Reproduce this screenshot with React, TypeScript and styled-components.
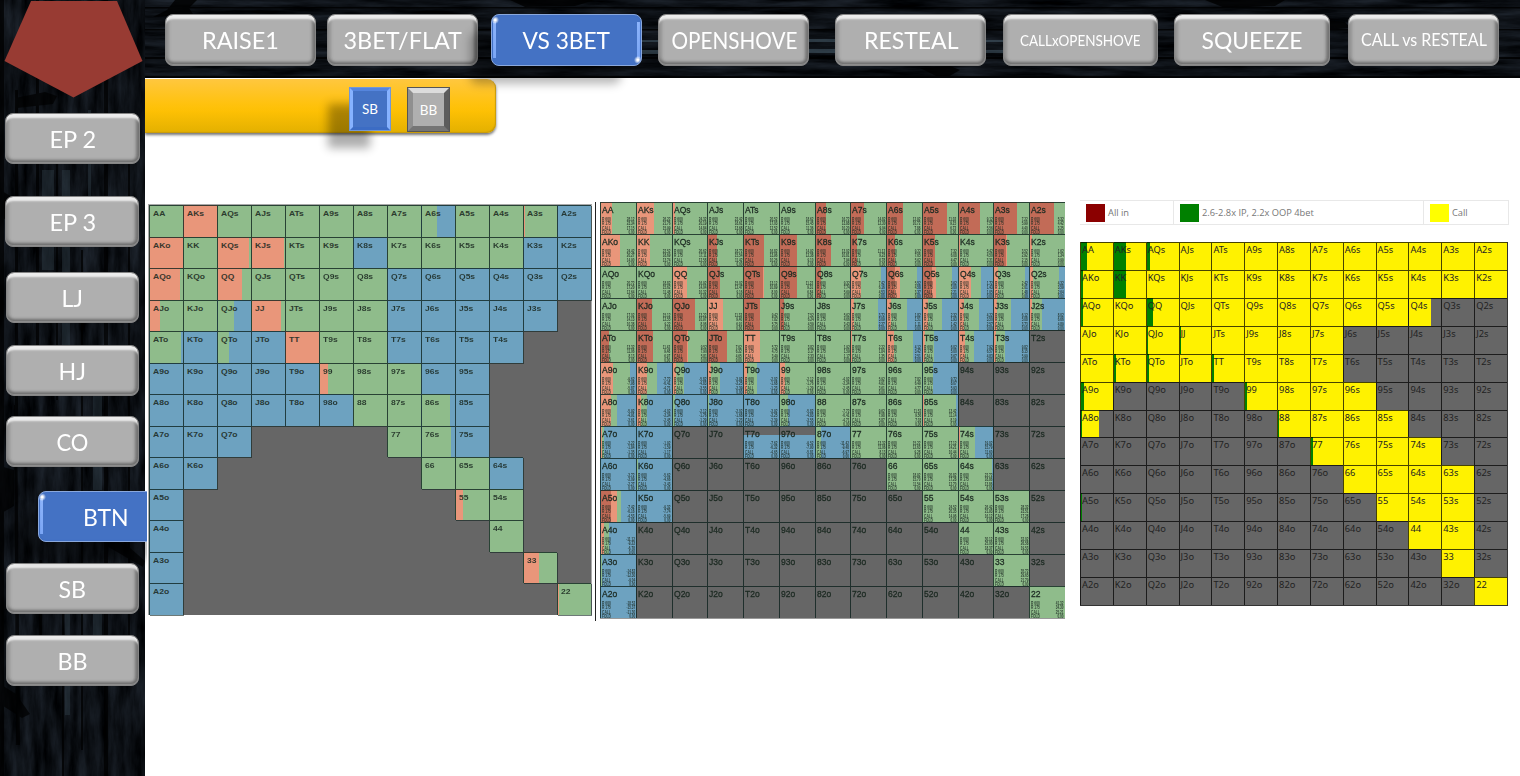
import React, { useLayoutEffect, useRef, useState } from 'react';
import styled, { createGlobalStyle, css } from 'styled-components';

const GlobalStyle = createGlobalStyle`
  * { box-sizing: border-box; }
  body { margin: 0; background: #fff; overflow: hidden; }
`;

const Page = styled.div`
  display: grid;
  grid-template-columns: 145px 1375px;
  grid-template-rows: 78px 698px;
  width: 1520px;
  height: 776px;
  background: #fff;
  font-family: Lato, 'Open Sans', sans-serif;
`;

const Sidebar = styled.nav`
  grid-row: 1 / 3;
  position: relative;
  z-index: 2;
  background: #090c10;
  display: flex;
  flex-direction: column;
  align-items: flex-start;
`;

const Header = styled.nav`
  position: relative;
  z-index: 1;
  background: #090c10;
  display: flex;
  align-items: flex-start;
  padding: 14px 0 0 19.5px;
`;

const Backdrop = styled.svg`
  position: absolute;
  inset: 0;
  width: 100%;
  height: 100%;
  z-index: -1;
`;

const Pentagon = styled.svg`
  display: block;
  width: 145px;
  height: 113px;
  flex: none;
`;

const greyBevel = css`
  background: #afafaf;
  border: 1px solid #858585;
  box-shadow:
    inset 0 -1px 0 #8d8d8d,
    inset 0 6px 2px -2px #ececec,
    inset 0 -5px 3px -2px #6d6d6d,
    inset -4px 0 3px -1px #747474,
    inset 4px 0 3px -1px #929292;
`;

const blueBevel = css`
  background:
    radial-gradient(circle at 3px 5px, #fff 0 1px, transparent 4px),
    radial-gradient(circle at calc(100% - 3px) calc(100% - 5px), #fff 0 1px, transparent 4px),
    linear-gradient(#8db4fb, #7ba6f5) 1px 7px / 3px calc(100% - 14px) no-repeat,
    linear-gradient(#8db4fb, #7ba6f5) calc(100% - 1px) 7px / 3px calc(100% - 14px) no-repeat,
    #4472c4;
  border: 1px solid #8aa8dc;
  box-shadow: -21px 18px 10px rgba(0, 0, 0, 0.28), inset 0 0 2px #3d6bc0;
`;

const NavButton = styled.button<{ $w: number; $h?: number; $gap?: number; $active?: boolean; $cut?: boolean }>`
  flex: none;
  display: flex;
  align-items: center;
  justify-content: center;
  padding: 1px 0 0 1px;
  width: ${(p) => p.$w}px;
  height: ${(p) => p.$h ?? 51.5}px;
  margin-left: ${(p) => p.$gap ?? 0}px;
  border-radius: 8px;
  color: #fff;
  font-family: inherit;
  ${(p) => (p.$active ? blueBevel : greyBevel)}
  ${(p) => p.$cut && 'clip-path: inset(-10px 25px -45px -40px);'}
`;

const SideSlot = styled.div<{ $h: number; $indent: number }>`
  flex: none;
  height: ${(p) => p.$h}px;
  padding-left: ${(p) => p.$indent}px;
`;

const Label = styled.span<{ $size: number }>`
  display: inline-block;
  white-space: nowrap;
  font-size: ${(p) => p.$size}px;
  line-height: 1.2;
`;

/* Squeezes a caption horizontally to the given width. */
function FitLabel({ text, width, size }: { text: string; width: number; size: number }) {
  const ref = useRef<HTMLSpanElement>(null);
  const [scale, setScale] = useState(1);
  useLayoutEffect(() => {
    if (ref.current) setScale(width / ref.current.offsetWidth);
  }, [width]);
  return (
    <Label ref={ref} $size={size} style={{ transform: `scaleX(${scale})` }}>
      {text}
    </Label>
  );
}

const Main = styled.main`
  position: relative;
`;

const PositionBar = styled.div`
  display: flex;
  align-items: flex-start;
  gap: 16px;
  width: 351px;
  height: 54px;
  margin-top: 1px;
  padding: 8px 0 0 204px;
  border-radius: 0 9px 9px 0;
  background: linear-gradient(#ffc73f, #ffc20f 45%, #fdc004 60%, #e3b000);
  box-shadow: 0 2px 3px rgba(0, 0, 0, 0.55), inset -1px -1px 1px #c79b0c;
`;

const Square = styled.button<{ $active?: boolean }>`
  width: ${(p) => (p.$active ? 42 : 43)}px;
  height: ${(p) => (p.$active ? 44 : 45)}px;
  padding: 0;
  color: #fff;
  font: 13.5px Lato, sans-serif;
  ${(p) =>
    p.$active
      ? css`
          background: #4472c4;
          border: 4px solid;
          border-color: #5585dd #86b2ff #3c6cc4 #86b2ff;
          outline: 1px solid #7397d6;
          outline-offset: -1px;
          box-shadow: -21px 17px 9px rgba(0, 0, 0, 0.32);
        `
      : css`
          background: #afafaf;
          border: 6px solid;
          border-color: #dcdcdc #5c5c5c #757575 #8f8f8f;
          outline: 1px solid #555;
          outline-offset: -1px;
        `}
`;

const Charts = styled.div`
  position: relative;
  z-index: 3;
  display: flex;
  align-items: flex-start;
  margin-top: 67px;
  padding-left: 3px;
`;

const chartKinds = {
  soft: css`
    width: 444px;
    height: 411px;
    margin-top: 4px;
    border: solid #a9a9a9;
    border-width: 1px 1px 0;
    background: #666;
    filter: blur(0.7px);
    font: bold 7.9px 'Liberation Sans', sans-serif;
  `,
  detail: css`
    width: 465px;
    height: 417px;
    margin: 2px 0 0 4px;
    background: #666;
    border-bottom: 1px solid #999;
    filter: blur(0.4px);
    font: 9.8px 'Liberation Sans', sans-serif;
  `,
  plain: css`
    width: 428px;
    height: 364px;
    border: solid #333;
    border-width: 0 1px 1px 0;
    background: #666;
    font: 9.3px 'Noto Sans', sans-serif;
  `,
};
type Kind = keyof typeof chartKinds;

const Chart = styled.div<{ $kind: Kind }>`
  display: grid;
  flex: none;
  grid-template-columns: repeat(13, 1fr);
  grid-template-rows: repeat(13, minmax(0, 1fr));
  color: #1c2a22;
  ${(p) => chartKinds[p.$kind]}
`;

const Cell = styled.div<{ $kind: Kind; $blank?: boolean }>`
  min-width: 0;
  display: flex;
  flex-direction: column;
  line-height: 1;
  ${(p) =>
    !p.$blank &&
    css`
      border: solid ${p.$kind === 'plain' ? 'rgba(0,0,0,.72)' : 'rgba(12,32,28,.78)'};
      border-width: 1px 0 0 1px;
    `}
  ${(p) => p.$kind === 'soft' && 'padding: 4px 0 0 3px;'}
  ${(p) => p.$kind === 'soft' && !p.$blank && 'box-shadow: 1px 1px 0 rgba(12,32,28,.6);'}
  ${(p) => p.$kind === 'detail' && 'padding: 1.5px 1px 0 1px;'}
  ${(p) => p.$kind === 'plain' && 'padding: 2px 0 0 1px; color: #222;'}
`;

const stretches = {
  soft: css`
    transform: scaleX(1.08);
    transform-origin: left;
    opacity: 0.88;
  `,
  detail: css`
    transform: scaleX(0.87);
    transform-origin: left;
    -webkit-text-stroke: 0.3px;
  `,
  plain: css``,
};

const Hand = styled.span<{ $kind: Kind }>`
  white-space: nowrap;
  ${(p) => stretches[p.$kind]}
`;

const Stats = styled.div`
  display: flex;
  justify-content: space-between;
  margin-top: 2.5px;
  font-size: 5px;
  font-weight: bold;
  line-height: 4.4px;
  white-space: pre;
  opacity: 0.85;
`;

const Actions = styled.div`
  transform: scaleX(0.66);
  transform-origin: left;
`;

const Figures = styled.div`
  text-align: right;
  transform: scaleX(0.62);
  transform-origin: right;
`;

const Divider = styled.div`
  width: 1px;
  height: 419px;
  margin: 2px 0 0 3px;
  background: #222;
`;

const RightColumn = styled.div`
  display: flex;
  flex-direction: column;
  gap: 17px;
  margin-left: 15px;
`;

const Legend = styled.div`
  display: grid;
  grid-template-columns: 93px 250px 86px;
  width: 429px;
  height: 25px;
  border: 1px solid #e8e8e8;
  border-left: 0;
  font: 9.3px 'Open Sans', sans-serif;
  color: #777;
`;

const LegendItem = styled.div`
  display: flex;
  align-items: center;
  gap: 3px;
  padding-left: 6px;
  & + & { border-left: 1px solid #e8e8e8; }
`;

const Swatch = styled.i<{ $color: string }>`
  width: 19px;
  height: 18px;
  background: ${(p) => p.$color};
`;

const RANKS = 'AKQJT98765432';
const COLORS: Record<string, string> = {
  g: '#8fbc8b',
  r: '#e9967a',
  b: '#6da2c0',
  d: '#c26b57',
  k: '#666666',
  y: '#fff200',
  e: '#008000',
};

const handName = (row: number, col: number) => {
  if (row === col) return RANKS[row] + RANKS[row];
  return row < col ? `${RANKS[row]}${RANKS[col]}s` : `${RANKS[col]}${RANKS[row]}o`;
};

/* "r30g86b" reads: red up to 30%, green up to 86%, blue for the rest; "^" splits top to bottom. */
const fill = (spec: string) => {
  const down = spec.startsWith('^');
  let from = 0;
  const stops = [...spec.matchAll(/([a-z])(\d*)/g)].map(([, key, end]) => {
    const to = end ? Number(end) : 100;
    const stop = `${COLORS[key]} ${from}% ${to}%`;
    from = to;
    return stop;
  });
  return `linear-gradient(${down ? '180deg' : '90deg'}, ${stops.join(', ')})`;
};

const SOFT = [
  'g r g g g g g g g45b g g r4g b',
  'r g r94g r97g g g b g g g g b b',
  'r90g g r74g g g g g b b b b b b',
  'r30g g g47b r88g g g g b b b b b k',
  'g95b b g33b b r g g b b b b k k',
  'b b b b b r25g g g b b k k k',
  'b b b b b b g g g86b b k k k',
  'b b b k k k k g g88b b k k k',
  'b b k k k k k k g g b k k',
  'b k k k k k k k k r22g g k k',
  'b k k k k k k k k k g k k',
  'b k k k k k k k k k k r45g k',
  'b k k k k k k k k k k k r3g',
];

const DETAIL = [
  'r32g r50g r6g g g g d28g d37g d47g d70g d63g d65g d70g',
  'r54g r38g g d25g d58g d48g d45g d17g d22g d33g r3g d33r38g r6g',
  'g g r41g d35g d53r57g d48g d14g r30g86b d22r36g85b d25r38g84b r35g64b r12g90b r10g84b',
  'g d43g d65g r42g d45g d12g g r10g78b r12g58b r13g54b r14g60b r8g49b r6g33b',
  'd22g d47g d40r43g d53g r47g g g r3g r20g74b r6g31b r17g45b r6g32b k',
  'r34g84b r29g58b r10g31b r8g34b r8g37b r13g g g g g30b k k k',
  'r30g46b r12g28b g5b g4b b g22b g g g r3g93b k k k',
  'r3g8b b k k ^k25b ^k25b g14b g g g r4g48b k k',
  'b g3b k k k k k k g g g97b k k',
  'd30r45g57b b k k k k k k k g g g k',
  'r10g24b k k k k k k k k k g g k',
  'g3b k k k k k k k k k k g k',
  'b k k k k k k k k k k k g',
];

const PLAIN = [
  'e18y e38y e10y y y y y y y y y y y',
  'e5y e38y y y y y y y y y y y y',
  'e5y y e18y y y y y y y y y70k k k',
  'y y e4y e4y y y y y k k k k k',
  'y e5y e5y y e5y y y y k k k k k',
  'e8y k k k k e5y y y y k k k k',
  'e3y55k k k k k k e4y y y y k k k',
  'k k k k k k k e6y y y y k k',
  'k k k k k k k k y y y y k',
  'e4k k k k k k k k k y y y k',
  'k k k k k k k k k k y y k',
  'k k k k k k k k k k k y k',
  'k k k k k k k k k k k k y',
];

const figures = (row: number, col: number) => {
  const base = Math.abs(27 - row * 3.7 - col * 1.9) + 1.12;
  const sign = row > 4 && col < 7 ? '-' : '';
  return [1, 0.83, 0.61].map((f) => sign + (base * f).toFixed(2)).concat('0.00').join('\n');
};

function RangeChart({ kind, rows }: { kind: Kind; rows: string[] }) {
  return (
    <Chart $kind={kind}>
      {rows.flatMap((line, r) =>
        line.split(' ').map((spec, c) => {
          const blank = kind === 'soft' && spec === 'k';
          return (
            <Cell
              key={`${r}-${c}`}
              $kind={kind}
              $blank={blank}
              style={blank ? undefined : { background: fill(spec) }}
            >
              {!blank && <Hand $kind={kind}>{handName(r, c)}</Hand>}
              {kind === 'detail' && spec !== 'k' && (
                <Stats>
                  <Actions>{'R 600\nR 175\nCALL\nFOLD'}</Actions>
                  <Figures>{figures(r, c)}</Figures>
                </Stats>
              )}
            </Cell>
          );
        })
      )}
    </Chart>
  );
}

function VerticalWood() {
  return (
    <Backdrop viewBox="0 0 145 776" preserveAspectRatio="none">
      <filter id="grainV" x="0" y="0" width="100%" height="100%" colorInterpolationFilters="sRGB">
        <feTurbulence type="fractalNoise" baseFrequency="0.09 0.018" numOctaves="5" seed="8" />
        <feColorMatrix values="0.18 0 0 0 -0.04  0.21 0 0 0 -0.04  0.25 0 0 0 -0.04  0 0 0 0 1" />
      </filter>
      <rect width="145" height="776" filter="url(#grainV)" />
      <g fill="#000" opacity=".7">
        <path d="M0 0h4v776H0zM15 90h3v330h-3zM36 0h3v380h-3zM56 160h2v240h-2zM104 0h4v776h-4zM128 120h2v560h-2z" />
        <path d="M14 405h3l3 340h-4zM39 560h3v120h-3zM62 600h2v176h-2zM81 250h2v500h-2zM0 190l14 8 2 18-16 4zM15 98l30-6 12 4-4 8-36 4zM0 466l14 4v36l-14 8zM0 684l16 10 14 20-8 4-22-14zM105 535l24 12 16 14-2 6-38-22z" />
      </g>
      <g fill="#33404b" opacity=".4">
        <path d="M42 170h12v100H42zM62 170h8v180h-8zM93 390h9v100h-9zM93 610h9v30h-9zM65 610h5v105h-5zM88 110h3v100h-3z" />
      </g>
    </Backdrop>
  );
}

function HorizontalWood() {
  return (
    <Backdrop viewBox="0 0 1375 78" preserveAspectRatio="none">
      <filter id="grainH" x="0" y="0" width="100%" height="100%" colorInterpolationFilters="sRGB">
        <feTurbulence type="fractalNoise" baseFrequency="0.015 0.13" numOctaves="5" seed="5" />
        <feColorMatrix values="0.18 0 0 0 -0.042  0.21 0 0 0 -0.042  0.25 0 0 0 -0.042  0 0 0 0 1" />
      </filter>
      <rect width="1375" height="78" filter="url(#grainH)" />
      <g fill="#526b7b" opacity=".45">
        <path d="M495 40h20v2h-20zM495 50h20v4h-20zM663 39h28v3h-28zM663 49h28v4h-28zM841 50h18v3h-18zM841 40h18v2h-18z" />
      </g>
      <g fill="#000" opacity=".8">
        <path d="M0 7h1375v1.500H0zM0 29h1375v1.500H0zM0 57h1375v2H0zM0 76h1375v2H0zM30 0h22l-8 8 4 6-40 3 14-7zM365 0h85l-20 6-50 1zM775 68l30-2 10 4-12 7h-10zM1060 0h80l-10 6-50 2zM1180 20l20 2 6 6-26 2z" />
      </g>
    </Backdrop>
  );
}

const TABS = [
  { text: 'RAISE1', w: 151, gap: 0, size: 24, fit: 77 },
  { text: '3BET/FLAT', w: 151, gap: 11, size: 24, fit: 118 },
  { text: 'VS 3BET', w: 151.5, gap: 13, size: 24, fit: 88, active: true },
  { text: 'OPENSHOVE', w: 151, gap: 16, size: 22.5, fit: 126 },
  { text: 'RESTEAL', w: 151, gap: 26, size: 24, fit: 95 },
  { text: 'CALLxOPENSHOVE', w: 154.5, gap: 17, size: 15.5, fit: 121 },
  { text: 'SQUEEZE', w: 156.5, gap: 16, size: 24, fit: 101 },
  { text: 'CALL vs RESTEAL', w: 151, gap: 18, size: 17, fit: 126 },
];

const SEATS = [
  { text: 'EP 2', w: 135, indent: 4.5, slot: 83, fit: 47 },
  { text: 'EP 3', w: 134, indent: 5, slot: 76, fit: 47 },
  { text: 'LJ', w: 133, indent: 5.5, slot: 73, fit: 21 },
  { text: 'HJ', w: 133, indent: 5.5, slot: 71, fit: 27 },
  { text: 'CO', w: 133, indent: 5.5, slot: 75, fit: 32 },
  { text: 'BTN', w: 134, indent: 38, slot: 72, fit: 46, active: true },
  { text: 'SB', w: 133, indent: 5.5, slot: 72, fit: 28 },
  { text: 'BB', w: 133, indent: 5.5, slot: 72, fit: 30 },
];

export default function App() {
  return (
    <>
      <GlobalStyle />
      <Page>
        <Sidebar>
          <VerticalWood />
          <Pentagon viewBox="0 0 145 113">
            <path d="M31 1H117L142.500 61L73.500 97.500L4.500 61Z" fill="#983b33" />
          </Pentagon>
          {SEATS.map((s) => (
            <SideSlot key={s.text} $h={s.slot} $indent={s.indent}>
              <NavButton $w={s.w} $h={51} $active={s.active} $cut={s.active}>
                <FitLabel text={s.text} width={s.fit} size={24} />
              </NavButton>
            </SideSlot>
          ))}
        </Sidebar>
        <Header>
          <HorizontalWood />
          {TABS.map((t) => (
            <NavButton key={t.text} $w={t.w} $gap={t.gap} $active={t.active}>
              <FitLabel text={t.text} width={t.fit} size={t.size} />
            </NavButton>
          ))}
        </Header>
        <Main>
          <PositionBar>
            <Square $active>SB</Square>
            <Square>BB</Square>
          </PositionBar>
          <Charts>
            <RangeChart kind="soft" rows={SOFT} />
            <Divider />
            <RangeChart kind="detail" rows={DETAIL} />
            <RightColumn>
              <Legend>
                <LegendItem><Swatch $color="#8b0000" />All in</LegendItem>
                <LegendItem><Swatch $color="#008000" />2.6-2.8x IP, 2.2x OOP 4bet</LegendItem>
                <LegendItem><Swatch $color="#ffff00" />Call</LegendItem>
              </Legend>
              <RangeChart kind="plain" rows={PLAIN} />
            </RightColumn>
          </Charts>
        </Main>
      </Page>
    </>
  );
}
